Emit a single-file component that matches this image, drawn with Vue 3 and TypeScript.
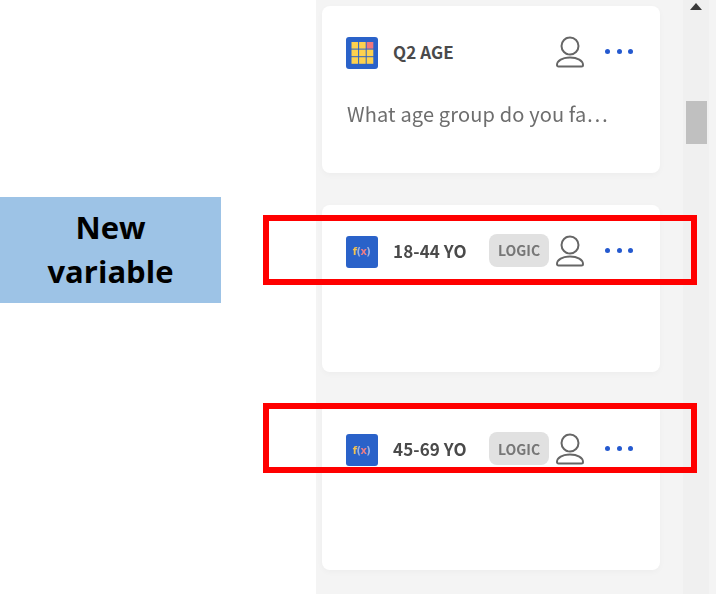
<script setup lang="ts">
interface Item {
  id: string
  title: string
  kind: 'grid' | 'fx'
  desc?: string
  logic?: boolean
}

const items: Item[] = [
  { id: 'q2', title: 'Q2 AGE', kind: 'grid', desc: 'What age group do you fa…' },
  { id: 'a', title: '18-44 YO', kind: 'fx', logic: true },
  { id: 'b', title: '45-69 YO', kind: 'fx', logic: true },
]

const gridCells = Array.from({ length: 9 }, (_, i) => i)
</script>

<template>
  <div class="page">
    <div class="side">
      <div class="note">New<br />variable</div>
    </div>

    <div class="panel">
      <div class="list">
        <div v-for="item in items" :key="item.id" class="card">
          <div class="head">
            <span class="type-icon">
              <svg v-if="item.kind === 'grid'" width="32" height="32" viewBox="0 0 32 32">
                <rect
                  v-for="i in gridCells"
                  :key="i"
                  :x="5.5 + (i % 3) * 7.6"
                  :y="5 + Math.floor(i / 3) * 7.6"
                  width="6.6"
                  height="6.6"
                  :fill="i === 2 ? '#f0787c' : '#fdd14e'"
                />
              </svg>
              <span v-else class="fx"><i class="f">f</i><i class="p">(</i><i class="x">x</i><i class="p">)</i></span>
            </span>
            <span class="title">{{ item.title }}</span>
            <span v-if="item.logic" class="logic">LOGIC</span>
            <svg class="user" width="28" height="32" viewBox="0 0 28 32" fill="none" stroke="#666" stroke-width="2">
              <circle cx="14" cy="10" r="8.500" />
              <path d="M1 29c0-4.500 5.500-7.500 13-7.500s13 3 13 7.500c0 1-.6 1.500-1.500 1.500h-23C1.600 30.500 1 30 1 29z" />
            </svg>
            <span class="dots"><i /><i /><i /></span>
          </div>
          <p v-if="item.desc" class="desc">{{ item.desc }}</p>
        </div>
      </div>
      <div class="scrollbar">
        <span class="arrow" />
        <span class="thumb" />
      </div>
    </div>

    <div class="mark mark-one" />
    <div class="mark mark-two" />
  </div>
</template>

<style>
html,
body {
  margin: 0;
  background: #fff;
  overflow: hidden;
}
</style>

<style scoped>
.page {
  position: relative;
  display: flex;
  width: 716px;
  height: 594px;
  overflow: hidden;
  font-family: "Noto Sans CJK SC", "Noto Sans", sans-serif;
}
.side {
  width: 316px;
  flex: none;
  padding-top: 197px;
  box-sizing: border-box;
}
.note {
  width: 221px;
  height: 106px;
  background: #9dc3e6;
  color: #000;
  font-family: "Open Sans", sans-serif;
  font-size: 31px;
  font-weight: 700;
  line-height: 44px;
  text-align: center;
  padding-top: 8px;
  box-sizing: border-box;
}
.panel {
  flex: 1;
  display: flex;
  background: #f4f4f4;
  filter: blur(0.4px);
}
.list {
  width: 338px;
  margin-left: 6px;
  padding-top: 6px;
  display: flex;
  flex-direction: column;
  gap: 31.5px;
}
.card {
  height: 167px;
  flex: none;
  background: #fff;
  border-radius: 8px;
  padding: 31px 27px 0 23.5px;
  box-sizing: border-box;
  box-shadow: 0 2px 6px rgba(0, 0, 0, 0.03);
}
.head {
  display: flex;
  align-items: center;
  height: 32px;
}
.type-icon {
  width: 32px;
  height: 32px;
  flex: none;
  background: #2a62c9;
  border-radius: 3px;
  display: flex;
  align-items: center;
  justify-content: center;
}
.fx {
  font-family: "DejaVu Sans", sans-serif;
  font-size: 10px;
  font-weight: 700;
  letter-spacing: -0.6px;
  color: #9db4e4;
}
.fx i {
  font-style: normal;
}
.fx .f {
  color: #f2c24f;
}
.fx .x {
  color: #ee7d86;
}
.title {
  margin: -3px 0 0 15.500px;
  font-size: 17px;
  font-weight: 700;
  letter-spacing: 0.1px;
  color: #4a4a4a;
  flex: 1;
  white-space: nowrap;
}
.logic {
  width: 60px;
  height: 33px;
  flex: none;
  margin: -3px 7px 0 0;
  background: #e1e1e1;
  border-radius: 8px;
  color: #777;
  font-size: 14px;
  font-weight: 700;
  display: flex;
  align-items: center;
  justify-content: center;
}
.user {
  flex: none;
  margin-top: -2px;
}
.dots {
  display: flex;
  gap: 6.5px;
  margin: -3px 0 0 21px;
}
.dots i {
  width: 5px;
  height: 5px;
  border-radius: 50%;
  background: #2459cf;
}
.desc {
  margin: 31px 0 0 1.500px;
  font-size: 20px;
  line-height: 28px;
  letter-spacing: 0.15px;
  color: #6e6e6e;
  white-space: nowrap;
}
.scrollbar {
  width: 26px;
  margin-left: 23px;
  background: #f0f0f0;
  position: relative;
}
.arrow {
  position: absolute;
  left: 7px;
  top: 3px;
  border-left: 6.5px solid transparent;
  border-right: 6.5px solid transparent;
  border-bottom: 7px solid #3a3a3a;
}
.thumb {
  position: absolute;
  left: 3px;
  top: 101px;
  width: 21px;
  height: 43px;
  background: #c0c0c0;
}
.mark {
  position: absolute;
  left: 263px;
  width: 434px;
  height: 70px;
  border: 6px solid #f00;
  box-sizing: border-box;
}
.mark-one {
  top: 215px;
}
.mark-two {
  top: 403px;
}
</style>
